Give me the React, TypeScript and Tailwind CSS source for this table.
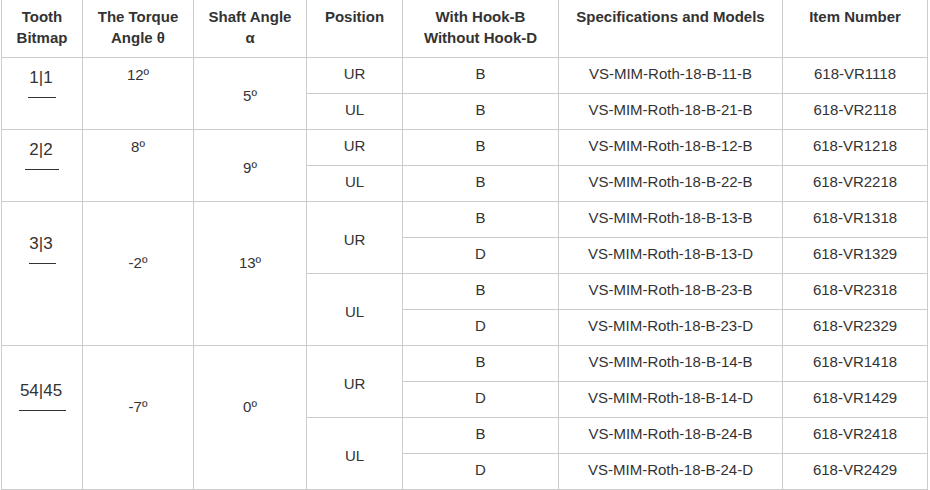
import type { ReactNode } from "react";

type Row = { hook: string; spec: string; item: string };
type Pos = { pos: string; rows: Row[] };
type Group = {
  tooth: string;
  ruleW: string;
  toothPad: string;
  torque: string;
  shaft: string;
  anglePad: string;
  torquePad: string;
  span: string;
  positions: Pos[];
};

const groups: Group[] = [
  {
    tooth: "1|1",
    ruleW: "w-[28px]",
    toothPad: "pt-[10px]",
    torque: "12º",
    shaft: "5º",
    torquePad: "pt-[7px]",
    anglePad: "pt-[28px]",
    span: "row-span-2",
    positions: [
      { pos: "UR", rows: [{ hook: "B", spec: "VS-MIM-Roth-18-B-11-B", item: "618-VR1118" }] },
      { pos: "UL", rows: [{ hook: "B", spec: "VS-MIM-Roth-18-B-21-B", item: "618-VR2118" }] },
    ],
  },
  {
    tooth: "2|2",
    ruleW: "w-[34px]",
    toothPad: "pt-[10px]",
    torque: "8º",
    shaft: "9º",
    torquePad: "pt-[7px]",
    anglePad: "pt-[28px]",
    span: "row-span-2",
    positions: [
      { pos: "UR", rows: [{ hook: "B", spec: "VS-MIM-Roth-18-B-12-B", item: "618-VR1218" }] },
      { pos: "UL", rows: [{ hook: "B", spec: "VS-MIM-Roth-18-B-22-B", item: "618-VR2218" }] },
    ],
  },
  {
    tooth: "3|3",
    ruleW: "w-[27px]",
    toothPad: "pt-[32px]",
    torque: "-2º",
    shaft: "13º",
    torquePad: "pt-[51px]",
    anglePad: "pt-[51px]",
    span: "row-span-4",
    positions: [
      {
        pos: "UR",
        rows: [
          { hook: "B", spec: "VS-MIM-Roth-18-B-13-B", item: "618-VR1318" },
          { hook: "D", spec: "VS-MIM-Roth-18-B-13-D", item: "618-VR1329" },
        ],
      },
      {
        pos: "UL",
        rows: [
          { hook: "B", spec: "VS-MIM-Roth-18-B-23-B", item: "618-VR2318" },
          { hook: "D", spec: "VS-MIM-Roth-18-B-23-D", item: "618-VR2329" },
        ],
      },
    ],
  },
  {
    tooth: "54|45",
    ruleW: "w-[47px]",
    toothPad: "pt-[35px]",
    torque: "-7º",
    shaft: "0º",
    torquePad: "pt-[51px]",
    anglePad: "pt-[51px]",
    span: "row-span-4",
    positions: [
      {
        pos: "UR",
        rows: [
          { hook: "B", spec: "VS-MIM-Roth-18-B-14-B", item: "618-VR1418" },
          { hook: "D", spec: "VS-MIM-Roth-18-B-14-D", item: "618-VR1429" },
        ],
      },
      {
        pos: "UL",
        rows: [
          { hook: "B", spec: "VS-MIM-Roth-18-B-24-B", item: "618-VR2418" },
          { hook: "D", spec: "VS-MIM-Roth-18-B-24-D", item: "618-VR2429" },
        ],
      },
    ],
  },
];

function Cell({ className = "", children }: { className?: string; children?: ReactNode }) {
  return (
    <div className={`border-r border-b border-[#cccccc] flex flex-col items-center text-center ${className}`}>
      {children}
    </div>
  );
}

function Head({ children }: { children: ReactNode }) {
  return (
    <Cell className="pt-[6px] text-[15px] leading-[21px] font-bold text-[#333333]">{children}</Cell>
  );
}

export default function App() {
  return (
    <div className="w-[930px] h-[490px] bg-white overflow-hidden font-['Liberation_Sans',Arial,sans-serif]">
      <div className="ml-px grid grid-cols-[81px_111px_113px_96px_156px_224px_145px] grid-rows-[58px_repeat(12,36px)] border-l border-[#cccccc] text-[15px] leading-5 text-[#333333]">
        <Head>
          Tooth
          <br />
          Bitmap
        </Head>
        <Head>
          The Torque
          <br />
          Angle θ
        </Head>
        <Head>
          Shaft Angle
          <br />
          α
        </Head>
        <Head>Position</Head>
        <Head>
          With Hook-B
          <br />
          Without Hook-D
        </Head>
        <Head>Specifications and Models</Head>
        <Head>Item Number</Head>

        {groups.map((g) => (
          <div key={g.tooth} className="contents">
            <Cell className={`${g.span} ${g.toothPad}`}>
              <span className="text-[17px] leading-5 pr-[2px]">{g.tooth}</span>
              <div className={`h-px bg-[#333333] mt-[9px] ${g.ruleW}`} />
            </Cell>
            <Cell className={`${g.span} ${g.torquePad}`}>{g.torque}</Cell>
            <Cell className={`${g.span} ${g.anglePad}`}>{g.shaft}</Cell>
            {g.positions.map((p) => (
              <div key={p.pos} className="contents">
                <Cell className={p.rows.length > 1 ? "row-span-2 pt-[28px]" : "pt-[6px]"}>{p.pos}</Cell>
                {p.rows.map((r) => (
                  <div key={r.item} className="contents">
                    <Cell className="pt-[6px]">{r.hook}</Cell>
                    <Cell className="pt-[6px]">{r.spec}</Cell>
                    <Cell className="pt-[6px]">{r.item}</Cell>
                  </div>
                ))}
              </div>
            ))}
          </div>
        ))}
      </div>
    </div>
  );
}
